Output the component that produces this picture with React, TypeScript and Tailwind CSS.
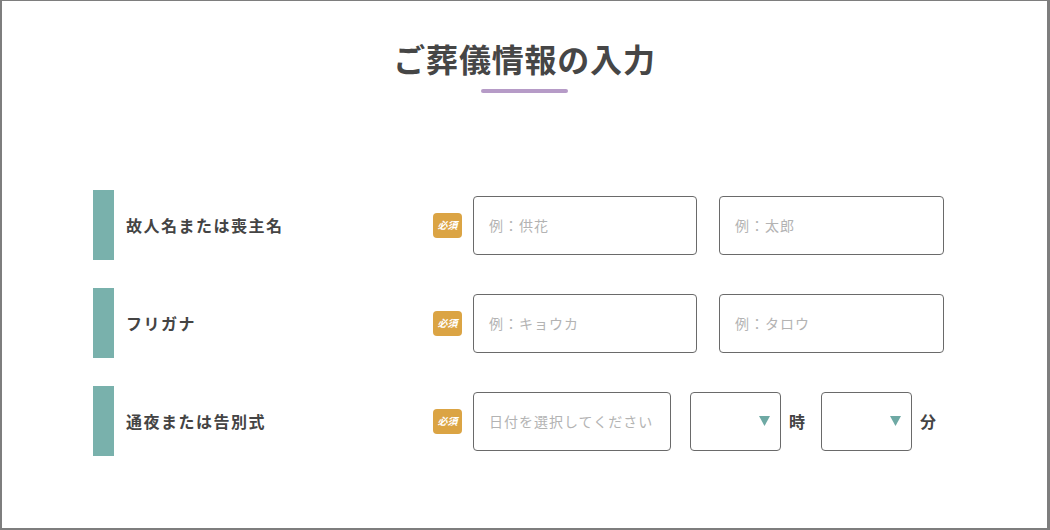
import React from "react";

const font = { fontFamily: '"Noto Sans CJK JP", "Noto Sans", sans-serif' };

function Badge() {
  return (
    <div className="w-[29px] h-[25px] rounded-[4px] bg-[#dba444] flex items-center justify-center text-white text-[10px] font-bold italic leading-none shrink-0">
      必須
    </div>
  );
}

function TextBox({ w, ph }: { w: string; ph: string }) {
  return (
    <div className={`${w} h-[59px] border border-[#6a6a6a] rounded-[4px] flex items-center pl-[15px] text-[14px] tracking-[1px] text-[#b3b3b3] shrink-0`}>
      {ph}
    </div>
  );
}

function SelectBox() {
  return (
    <div className="w-[91px] h-[59px] border border-[#6a6a6a] rounded-[4px] flex items-center justify-end pr-[10px] shrink-0">
      <svg width="11" height="10" viewBox="0 0 11 10">
        <polygon points="0,0 11,0 5.5,10" fill="#6ea9a4" />
      </svg>
    </div>
  );
}

function Row({ label, children }: { label: string; children: React.ReactNode }) {
  return (
    <div className="flex items-center pl-[91px]">
      <div className="w-[21px] h-[70px] bg-[#79b1ac] shrink-0" />
      <div className="w-[319px] pl-[12px] text-[16px] font-bold tracking-[1.5px] text-[#444]">{label}</div>
      <Badge />
      <div className="flex items-center ml-[11px]">{children}</div>
    </div>
  );
}

export default function App() {
  return (
    <div
      style={font}
      className="w-[1050px] h-[530px] bg-white border-t border-l-2 border-r-[3px] border-b-2 border-[#7e7e7e] box-border flex flex-col items-center"
    >
      <h1 className="mt-[35px] text-[32px] leading-[44px] font-bold text-[#464646] tracking-[0.8px]">ご葬儀情報の入力</h1>
      <div className="mt-[9px] w-[87px] h-[4px] rounded-full bg-[#b69bc7]" />
      <div className="self-stretch mt-[97px] flex flex-col gap-[28px]">
        <Row label="故人名または喪主名">
          <TextBox w="w-[224px]" ph="例：供花" />
          <div className="ml-[22px]">
            <TextBox w="w-[225px]" ph="例：太郎" />
          </div>
        </Row>
        <Row label="フリガナ">
          <TextBox w="w-[224px]" ph="例：キョウカ" />
          <div className="ml-[22px]">
            <TextBox w="w-[225px]" ph="例：タロウ" />
          </div>
        </Row>
        <Row label="通夜または告別式">
          <TextBox w="w-[198px]" ph="日付を選択してください" />
          <div className="ml-[19px]">
            <SelectBox />
          </div>
          <div className="ml-[8px] w-[32px] text-[16px] font-bold text-[#444]">時</div>
          <SelectBox />
          <div className="ml-[8px] text-[16px] font-bold text-[#444]">分</div>
        </Row>
      </div>
    </div>
  );
}
